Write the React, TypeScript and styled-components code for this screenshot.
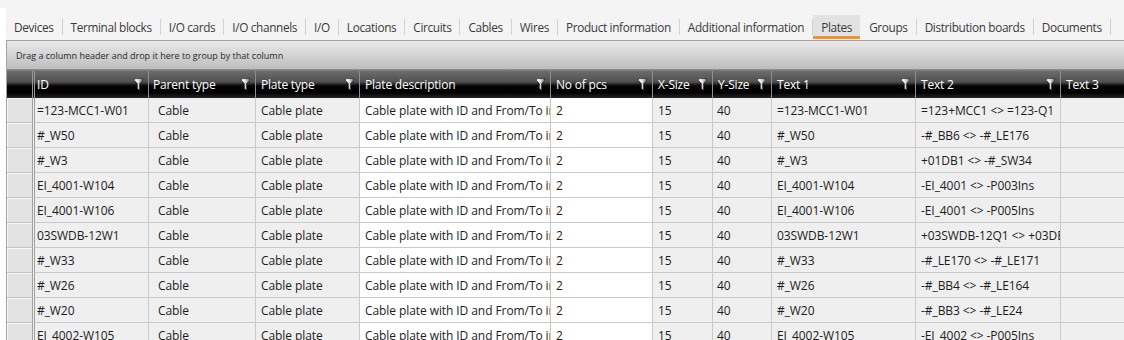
import React from 'react';
import styled, { createGlobalStyle } from 'styled-components';

const GlobalStyle = createGlobalStyle`
  html, body {
    margin: 0;
    padding: 0;
    width: 1124px;
    height: 340px;
    overflow: hidden;
    background: #f4f4f4;
  }
  body {
    font-family: "Segoe UI", "Open Sans", "Noto Sans", sans-serif;
    -webkit-font-smoothing: antialiased;
  }
  * { box-sizing: border-box; }
`;

const Screen = styled.div`
  width: 1124px;
  height: 340px;
  overflow: hidden;
  display: flex;
  flex-direction: column;
  background: #f4f4f4;
  padding-top: 8px;
`;

const Body = styled.div`
  flex: 1;
  min-height: 0;
  display: flex;
  flex-direction: column;
  border-left: 6px solid #ffffff;
`;

const TabBar = styled.div`
  height: 32px;
  display: flex;
  align-items: flex-end;
  padding-bottom: 1px;
`;

const TabStrip = styled.div`
  height: 24px;
  display: flex;
  align-items: center;
`;

const Tab = styled.div<{ $active?: boolean }>`
  height: 24px;
  display: flex;
  align-items: center;
  padding: 0 8px;
  font-size: 11.8px;
  letter-spacing: -0.35px;
  color: #3a3a3a;
  white-space: nowrap;
  background: ${p => (p.$active ? '#e2e2e2' : 'transparent')};
  box-shadow: ${p => (p.$active ? 'inset 0 -3px 0 #f39033' : 'none')};
`;

const TabSep = styled.div<{ $hidden?: boolean }>`
  width: 1px;
  height: 16px;
  background: ${p => (p.$hidden ? 'transparent' : '#d2d2d2')};
`;

const GridFrame = styled.div`
  flex: 1;
  min-height: 0;
  display: flex;
  flex-direction: column;
  border-top: 1px solid #a3a3a3;
  border-left: 1px solid #a3a3a3;
  overflow: hidden;
`;

const GroupPanel = styled.div`
  height: 29px;
  flex-shrink: 0;
  display: flex;
  align-items: center;
  padding-left: 9px;
  padding-top: 1px;
  font-size: 9px;
  letter-spacing: 0px;
  color: #2a2a2a;
  background: linear-gradient(to bottom, #e9e9e9 0%, #d6d6d6 45%, #bdbdbd 100%);
  border-bottom: 1px solid #8c8c8c;
`;

const COLS = '25px 116px 107px 104px 191px 102px 60px 59px 144px 145px 200px';

const HeaderRow = styled.div`
  height: 28px;
  flex-shrink: 0;
  display: grid;
  grid-template-columns: ${COLS};
  background: linear-gradient(
    to bottom,
    #6c6c6c 0%,
    #505050 40%,
    #2a2a2a 48%,
    #050505 55%,
    #000000 80%,
    #262626 100%
  );
  border-top: 1px solid #7a7a7a;
`;

const HeaderCell = styled.div<{ $pad: number; $first?: boolean; $lead?: boolean }>`
  display: flex;
  align-items: center;
  justify-content: space-between;
  padding: 0 5px 0 ${p => p.$pad}px;
  font-size: 12px;
  letter-spacing: -0.2px;
  color: #ffffff;
  white-space: nowrap;
  overflow: hidden;
  border-left: ${p =>
    p.$lead ? 'none' : p.$first ? '3px double #9a9a9a' : '1px solid #8d8d8d'};
`;

const FilterIcon = () => (
  <svg width="9" height="13" viewBox="0 0 9 13">
    <defs>
      <linearGradient id="funnelGrad" x1="0" x2="1" y1="0" y2="0">
        <stop offset="0" stopColor="#ffffff" />
        <stop offset="0.45" stopColor="#e6e6e6" />
        <stop offset="1" stopColor="#7c7c7c" />
      </linearGradient>
    </defs>
    <path
      d="M0.5 0.6 H8.5 V2.4 L5.6 5.6 V12.4 L3.4 10.6 V5.6 L0.5 2.4 Z"
      fill="url(#funnelGrad)"
      stroke="#1a1a1a"
      strokeWidth="0.6"
    />
  </svg>
);

const Rows = styled.div`
  flex: 1;
  min-height: 0;
  overflow: hidden;
`;

const Row = styled.div`
  height: 25px;
  display: grid;
  grid-template-columns: ${COLS};
`;

const Indicator = styled.div`
  background: #e3e3e3;
  border-bottom: 1px solid #c4c4c4;
  box-shadow: inset 1px 1px 0 #f7f7f7;
`;

const Cell = styled.div<{ $pad: number; $white?: boolean; $first?: boolean }>`
  display: flex;
  align-items: center;
  padding-left: ${p => p.$pad}px;
  font-size: 12px;
  letter-spacing: -0.08px;
  color: #1c1c1c;
  white-space: nowrap;
  overflow: hidden;
  background: ${p => (p.$white ? '#ffffff' : '#efefef')};
  border-bottom: 1px solid #c9c9c9;
  border-left: ${p => (p.$first ? '3px double #a0a0a0' : '1px solid #c9c9c9')};
`;

type Col = { key: string; title: string; hpad: number; cpad: number; white?: boolean; filter?: boolean };

const columns: Col[] = [
  { key: 'id', title: 'ID', hpad: 2, cpad: 2, filter: true },
  { key: 'parent', title: 'Parent type', hpad: 4, cpad: 9, filter: true },
  { key: 'ptype', title: 'Plate type', hpad: 5, cpad: 5, filter: true },
  { key: 'desc', title: 'Plate description', hpad: 5, cpad: 5, white: true, filter: true },
  { key: 'pcs', title: 'No of pcs', hpad: 5, cpad: 5, white: true, filter: true },
  { key: 'x', title: 'X-Size', hpad: 5, cpad: 5, filter: true },
  { key: 'y', title: 'Y-Size', hpad: 5, cpad: 4, filter: true },
  { key: 't1', title: 'Text 1', hpad: 5, cpad: 5, filter: true },
  { key: 't2', title: 'Text 2', hpad: 5, cpad: 5, filter: true },
  { key: 't3', title: 'Text 3', hpad: 5, cpad: 5 },
];

const ids: [string, string][] = [
  ['=123-MCC1-W01', '=123+MCC1 <> =123-Q1'],
  ['#_W50', '-#_BB6 <> -#_LE176'],
  ['#_W3', '+01DB1 <> -#_SW34'],
  ['EI_4001-W104', '-EI_4001 <> -P003Ins'],
  ['EI_4001-W106', '-EI_4001 <> -P005Ins'],
  ['03SWDB-12W1', '+03SWDB-12Q1 <> +03DB1'],
  ['#_W33', '-#_LE170 <> -#_LE171'],
  ['#_W26', '-#_BB4 <> -#_LE164'],
  ['#_W20', '-#_BB3 <> -#_LE24'],
  ['EI_4002-W105', '-EI_4002 <> -P005Ins'],
];

const rows = ids.map(([id, t2]) => ({
  id,
  parent: 'Cable',
  ptype: 'Cable plate',
  desc: 'Cable plate with ID and From/To information',
  pcs: '2',
  x: '15',
  y: '40',
  t1: id,
  t2,
  t3: '',
}));

const tabs = [
  'Devices',
  'Terminal blocks',
  'I/O cards',
  'I/O channels',
  'I/O',
  'Locations',
  'Circuits',
  'Cables',
  'Wires',
  'Product information',
  'Additional information',
  'Plates',
  'Groups',
  'Distribution boards',
  'Documents',
];
const activeTab = 'Plates';

export default function App() {
  return (
    <>
      <GlobalStyle />
      <Screen>
        <Body>
          <TabBar>
            <TabStrip>
              {tabs.map(t => (
                <React.Fragment key={t}>
                  <Tab $active={t === activeTab}>{t}</Tab>
                  <TabSep $hidden={t === activeTab} />
                </React.Fragment>
              ))}
            </TabStrip>
          </TabBar>
          <GridFrame>
            <GroupPanel>Drag a column header and drop it here to group by that column</GroupPanel>
            <HeaderRow>
              <HeaderCell $pad={0} $lead />
              {columns.map((c, i) => (
                <HeaderCell key={c.key} $pad={c.hpad} $first={i === 0}>
                  <span>{c.title}</span>
                  {c.filter && <FilterIcon />}
                </HeaderCell>
              ))}
            </HeaderRow>
            <Rows>
              {rows.map((r, ri) => (
                <Row key={ri}>
                  <Indicator />
                  {columns.map((c, i) => (
                    <Cell key={c.key} $pad={c.cpad} $white={c.white} $first={i === 0}>
                      {(r as Record<string, string>)[c.key]}
                    </Cell>
                  ))}
                </Row>
              ))}
            </Rows>
          </GridFrame>
        </Body>
      </Screen>
    </>
  );
}
